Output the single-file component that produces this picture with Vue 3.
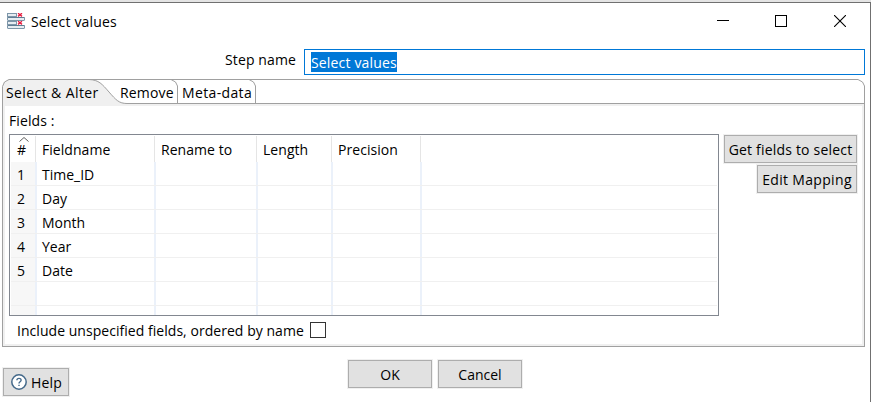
<script setup>
const columns = ['Fieldname', 'Rename to', 'Length', 'Precision', '']
const rows = ['Time_ID', 'Day', 'Month', 'Year', 'Date', '', '']
</script>

<template>
  <main class="window">
    <header class="titlebar">
      <svg class="app-icon" width="18" height="17" viewBox="0 0 18 17">
        <g fill="#e6edf2" stroke="#7d96a9">
          <rect x=".5" y=".5" width="9" height="3" />
          <rect x=".5" y="8.5" width="9" height="3" />
          <rect x=".5" y="4.5" width="17" height="3" rx=".5" />
          <rect x=".5" y="12.5" width="17" height="3" rx=".5" />
        </g>
        <path d="M.5 4.500H17.500M.5 12.500H17.500" stroke="#5f7d93" />
        <path d="M11 .2l4 3.200m0-3.200l-4 3.200M11 8.200l4 3.200m0-3.200l-4 3.200" stroke="#e51b3e" stroke-width="1.350" />
      </svg>
      <h1><span class="t-title">Select values</span></h1>
      <div class="controls">
        <svg width="12" height="12"><path d="M0 5.500H12" stroke="#000" /></svg>
        <svg width="12" height="12"><rect x=".5" y=".5" width="11" height="11" fill="none" stroke="#000" /></svg>
        <svg width="12" height="12"><path d="M0 0L12 12M12 0L0 12" stroke="#000" stroke-width="1.100" /></svg>
      </div>
    </header>

    <div class="step">
      <label><span class="t-step">Step name</span></label>
      <div class="input"><span class="selected t-title">Select values</span></div>
    </div>

    <section class="folder">
      <nav class="tabs">
        <svg class="tab-lines" width="863" height="25" viewBox="0 0 863 25">
          <path d="M0 25V8L2 3L7 0H88C98 1 100 5 108 14C114 21 117 24 124 24V25Z" fill="#f0f0f0" />
          <path d="M.5 25V7.500L2.500 3L7 .5H856L860.500 3L862.500 7V25M87 .5C97 1 100 5 107 13C114 21 117 24.500 125 24.500H863M169 .5L173.500 3L175.500 7V24M247 .5L251.500 3L253.500 7V24" fill="none" stroke="#a0a0a0" />
        </svg>
        <span class="tab tab-a">Select &amp; Alter</span>
        <span class="tab tab-b">Remove</span>
        <span class="tab tab-c">Meta-data</span>
      </nav>
      <div class="panel">
        <div class="fields-label">Fields :</div>
        <div class="body">
          <div class="table">
            <div class="tr head">
              <div class="num"><svg class="sort" width="10" height="5"><path d="M.5 4.500L5 .5L9.500 4.500" fill="none" stroke="#606060" /></svg>#</div>
              <div v-for="c in columns" :key="c" class="cell">{{ c }}</div>
            </div>
            <div v-for="(r, i) in rows" :key="i" class="tr row">
              <div class="num">{{ r ? i + 1 : '' }}</div>
              <div class="cell">{{ r }}</div>
              <div class="cell"></div><div class="cell"></div><div class="cell"></div><div class="cell"></div>
            </div>
          </div>
          <div class="side">
            <button class="get">Get fields to select</button>
            <button class="edit">Edit Mapping</button>
          </div>
        </div>
        <div class="include"><span class="t-include">Include unspecified fields, ordered by name</span><i class="check"></i></div>
      </div>
    </section>

    <footer>
      <button class="help">
        <svg width="16" height="16" viewBox="0 0 16 16"><circle cx="8" cy="8" r="7.200" fill="#fff" stroke="#44698a" stroke-width="1.500" /><path d="M5.900 6.300C5.900 3.700 10.100 3.700 10.100 6.200C10.100 7.800 8 7.700 8 9.500M8 10.700V12.100" fill="none" stroke="#44698a" stroke-width="1.400" /></svg>
        <span>Help</span>
      </button>
      <button class="action ok">OK</button>
      <button class="action">Cancel</button>
    </footer>
  </main>
</template>

<style>
body { overflow: hidden; background: #fff; }
</style>

<style scoped>
* { box-sizing: border-box; }
.window { width: 871px; height: 402px; border-top: 2px solid #e4e4e4; font: 14px/20px "Open Sans", "Noto Sans", sans-serif; color: #000; background: #fff; overflow: hidden; white-space: nowrap; display: grid; grid-template-rows: 47px 30px 268px 55px; }
.window > * { border-right: 1px solid #707070; }
.titlebar { border-top: 1px solid #707070; display: flex; padding: 10px 24px 0 7px; }
h1 { margin: -1px 0 0 6px; font: inherit; }
.t-title { letter-spacing: .16px; }
.t-step { letter-spacing: .12px; }
.controls { margin-left: auto; display: flex; gap: 46px; padding-top: 2px; }
.controls svg { display: block; }
.controls svg:nth-child(2) { margin-right: 1px; }
.step { display: flex; justify-content: flex-end; padding-right: 5px; }
.step label { padding: 1px 8px 0 0; }
.input { width: 561px; height: 26px; border: 1px solid #0078d7; padding: 2px 6px; display: flex; }
.selected { width: 86px; height: 20px; background: #0078d7; color: #fff; line-height: 21px; }
.folder { padding: 0 5px 0 2px; }
.tabs { height: 25px; position: relative; display: flex; }
.tab-lines { position: absolute; left: 0; top: 0; display: block; }
.tab { position: relative; line-height: 27px; }
.tab-a { padding-left: 4px; width: 118px; letter-spacing: .4px; }
.tab-b { width: 62px; letter-spacing: .15px; }
.tab-c { letter-spacing: .36px; }
.panel { height: 243px; border: 1px solid #a0a0a0; border-top: 0; box-shadow: inset 0 0 0 2px #f0f0f0; padding: 0 7px 0 6px; }
.fields-label { height: 30px; padding-top: 7px; letter-spacing: .1px; }
.body { display: flex; justify-content: space-between; }
.table { width: 710px; height: 182px; border: 1px solid #828790; padding: 1px; overflow: hidden; }
.tr { display: grid; grid-template-columns: 24px 119px 102px 75px 89px 1fr; height: 24px; }
.row { border-bottom: 1px solid #f0f0f0; line-height: 26px; }
.row > * { height: 24px; }
.head { height: 26px; line-height: 28px; }
.head .cell { border-left: 1px solid #e5e5e5; padding-left: 6px; letter-spacing: .05px; }
.row .cell { border-left: 2px solid #ebf1fa; padding-left: 5px; letter-spacing: 0; }
.row .cell, .row .num { margin-bottom: -1px; height: 23px; }
.num { padding-left: 6px; position: relative; }
.row .num { background: #f7f7f7; }
.sort { position: absolute; left: 8px; top: 1px; }
.side { display: flex; flex-direction: column; align-items: flex-end; gap: 2px; padding-top: 1px; }
button { display: flex; align-items: center; justify-content: center; height: 28px; padding: 1px 0 0; margin: 0; border: 1px solid #adadad; background: #e1e1e1; color: #000; font: inherit; box-shadow: 0 0 0 1px #f0f0f0; }
.get { width: 133px; letter-spacing: .19px; }
.edit { width: 100px; letter-spacing: .33px; }
.include { display: flex; padding: 5px 0 0 8px; }
.t-include { width: 285px; letter-spacing: .04px; }
.check { width: 16px; height: 16px; border: 1px solid #333; margin: 1px 0 0 8px; }
footer { display: flex; padding: 13px 0 0 3px; }
.help { width: 66px; margin-top: 8px; gap: 4px; letter-spacing: .2px; padding-left: 1px; }
.help svg { margin-top: -1px; }
.action { width: 84px; margin-left: 6px; }
.ok { margin-left: 279px; }
</style>
